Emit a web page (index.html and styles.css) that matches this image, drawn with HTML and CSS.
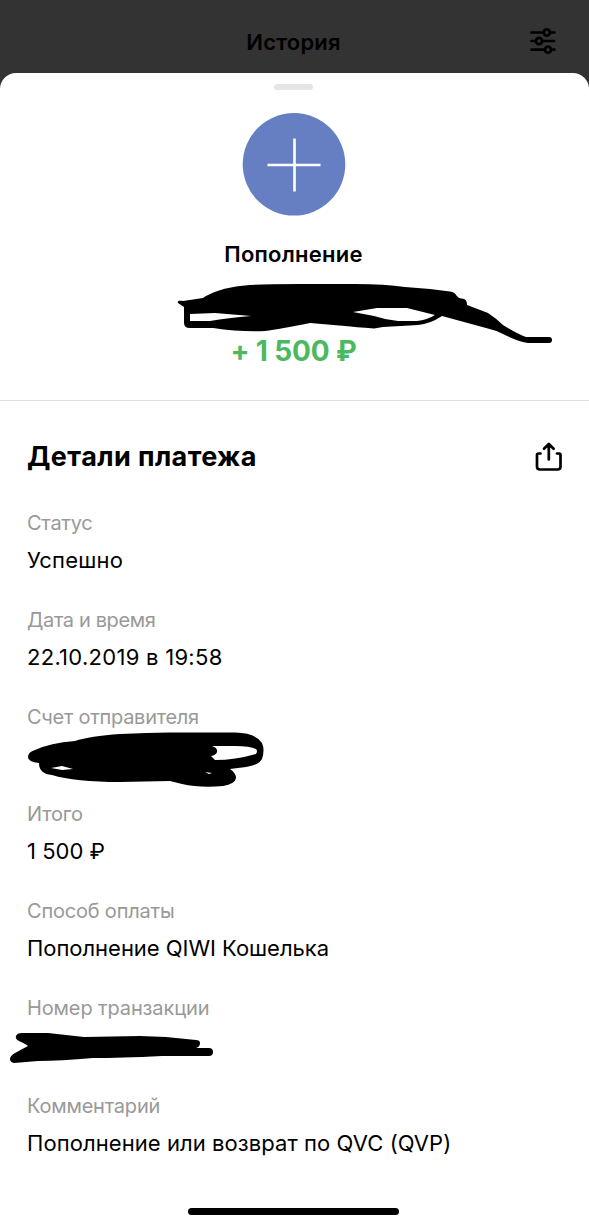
FILE: index.html
```html
<!DOCTYPE html>
<html lang="ru">
<head>
<meta charset="utf-8">
<title>История</title>
<link rel="stylesheet" href="styles.css">
</head>
<body>
<div class="screen">
  <header class="topbar">
    <h1 class="topbar-title">История</h1>
    <svg class="filter-icon" viewBox="0 0 28 28" width="28" height="28" fill="none" stroke="#000" stroke-width="2.7" stroke-linecap="round">
      <path d="M2.500 5.500H14M21.500 5.500H25.500M2.500 14H6.500M14 14H25M2.500 22.700H15M22.500 22.700H25.500"/>
      <circle cx="17.800" cy="5.500" r="3.100"/><circle cx="10" cy="14" r="3.100"/><circle cx="19" cy="22.700" r="3.100"/>
    </svg>
  </header>
  <main class="sheet">
    <div class="handle"></div>
    <section class="summary">
      <svg class="avatar" viewBox="0 0 104 104" width="104" height="104">
        <circle cx="52" cy="52.300" r="51.300" fill="#657fc2"/>
        <path d="M25.500 53H78.500M52.500 26.500V79.500" stroke="#fff" stroke-width="2.600"/>
      </svg>
      <h2 class="operation">Пополнение</h2>
      <p class="amount">+ 1 500 ₽</p>
      <svg class="mark mark-name" viewBox="160 270 410 80" width="410" height="80">
        <path fill-rule="evenodd" d="M178 303C177 301 179 300.500 183 301L203 298C210 293 225 287 245 285.500Q260 284 300 284H355Q385 284 405 287L430 289L450 291.500Q455 292 456 295L459 298L464 299Q467 300 467 305L488 313Q497 319 503 325Q517 334 526 337H549Q552 337 552 340Q552 343 549 343H528Q519 342 503 334Q495 330 486 328L442 316Q430 324 418 325L383 327L374 328.500Q355 327 345 326L310 323Q280 329 265 331Q240 332 213 328H190Q184 328 184 323L184 307ZM190 314V321H210Q228 318 251 316L215 313ZM353 312L374 316Q386 320 398 321H417Q427 320 435 315L407 308H377Z"/>
      </svg>
    </section>
    <section class="details">
      <div class="details-head">
        <h2 class="details-title">Детали платежа</h2>
        <svg class="share-icon" viewBox="0 0 30 30" width="30" height="30" fill="none" stroke="#000" stroke-width="2.700" stroke-linecap="round" stroke-linejoin="round">
          <path d="M6.500 11.500H4.500Q3 11.500 3 13V24.500Q3 27.500 6 27.500H23.500Q26.500 27.500 26.500 24.500V13Q26.500 11.500 25 11.500H23M14.800 17.500V2.500M10 6.800L14.800 2L19.600 6.800"/>
        </svg>
      </div>
      <dl class="fields">
        <div class="field"><dt class="l-status">Статус</dt><dd class="v-status">Успешно</dd></div>
        <div class="field"><dt class="l-date">Дата и время</dt><dd class="v-date">22.10.2019 в 19:58</dd></div>
        <div class="field"><dt class="l-sender">Счет отправителя</dt><dd>
          <svg class="mark mark-account" viewBox="20 725 250 65" width="250" height="65">
            <path fill-rule="evenodd" d="M28 757Q28 752 35 750Q50 743 75 741Q90 736 120 734Q155 732 180 732.500H235Q256 733 262 743Q265 750 262 759Q259 765 246 767L230 769Q236 773 236 778Q235 784 223 786Q200 788 182 784L170 781L120 782Q75 782 52 775Q39 774 39 763Q28 762 28 757ZM212 746Q218 748 217 752Q216 755 211 756L215 760Q235 760 256 754Q258 751 256 749Q250 746 235 746ZM51 768L62 770L73 769L62 766ZM205 772L212 773L209 774Z"/>
          </svg></dd></div>
        <div class="field"><dt class="l-total">Итого</dt><dd class="v-total">1 500 ₽</dd></div>
        <div class="field"><dt class="l-method">Способ оплаты</dt><dd class="v-method">Пополнение QIWI Кошелька</dd></div>
        <div class="field"><dt class="l-number">Номер транзакции</dt><dd>
          <svg class="mark mark-number" viewBox="5 1025 215 45" width="215" height="45">
            <path d="M19 1041Q15 1039 16 1036Q17 1033 22 1033H48L84 1037L140 1036L166 1037L196 1040Q200 1040 200 1043Q200 1047 196 1048H209Q213 1048 213 1052Q213 1056 209 1056H162Q120 1058 93 1058Q60 1061 38 1061L14 1063Q10 1062 10 1059Q10 1056 15 1053L28 1046Q26 1044 19 1041Z"/>
          </svg></dd></div>
        <div class="field"><dt class="l-comment">Комментарий</dt><dd class="v-comment">Пополнение или возврат по QVC (QVP)</dd></div>
      </dl>
    </section>
    <div class="home-indicator"></div>
  </main>
</div>
</body>
</html>
```
FILE: styles.css
```css
* { box-sizing: border-box; }
body, h1, h2, p, dl, dd { margin: 0; }
body { background: #333; font-family: Inter, "Liberation Sans", sans-serif; color: #000; }
svg { display: block; }
.screen { width: 589px; height: 1227px; display: flex; flex-direction: column; overflow: hidden; }
.topbar { height: 73px; flex: none; display: grid; grid-template-columns: 1fr auto 1fr; padding: 10px 32px 0 30px; align-items: center; }
.topbar-title { grid-column: 2; font-size: 22px; line-height: 28px; font-weight: 600; letter-spacing: .2px; }
.filter-icon { justify-self: end; margin-top: -2px; }
.sheet { flex: 1; background: #fff; border-radius: 16px 16px 0 0; display: flex; flex-direction: column; padding-top: 11px; }
.handle { width: 39px; height: 6px; border-radius: 3px; background: #e5e5e5; align-self: center; margin-right: 2px; flex: none; }
.summary { position: relative; height: 311px; flex: none; border-bottom: 1px solid #dedede; display: flex; flex-direction: column; align-items: center; padding: 22px 2px 0 0; }
.operation { margin-top: 23px; font-size: 22px; line-height: 30px; font-weight: 600; letter-spacing: .25px; }
.amount { margin-top: 64px; font-size: 28px; line-height: 36px; font-weight: 700; letter-spacing: -.15px; color: #4cb860; white-space: nowrap; }
.mark { overflow: visible; }
.mark-name { position: absolute; left: 160px; top: 180px; }
.details { padding: 38px 25px 0 27px; }
.details-head { display: flex; justify-content: space-between; align-items: center; height: 36px; }
.details-title { font-size: 27px; line-height: 36px; font-weight: 700; letter-spacing: .4px; }
.fields { margin-top: 34px; }
.field { position: relative; height: 97.1px; }
.field dt { font-size: 20px; line-height: 28px; color: #999; white-space: nowrap; letter-spacing: -.2px; }
.field dd { margin-top: 9px; font-size: 22px; line-height: 28px; white-space: nowrap; }
.field .l-status, .field .l-sender { letter-spacing: -.27px; }
.field .l-date { letter-spacing: -.37px; }
.field .l-number { letter-spacing: -.13px; }
.field .v-status { letter-spacing: .18px; }
.field .v-date { letter-spacing: .28px; }
.field .v-method { letter-spacing: -.04px; }
.field .v-comment { letter-spacing: .07px; }
.mark-account { position: absolute; left: -7px; top: 22px; }
.mark-number { position: absolute; left: -22px; top: 31px; }
.home-indicator { width: 211px; height: 7px; border-radius: 4px; background: #000; align-self: center; margin: 19px 2px 0 0; flex: none; }
```
